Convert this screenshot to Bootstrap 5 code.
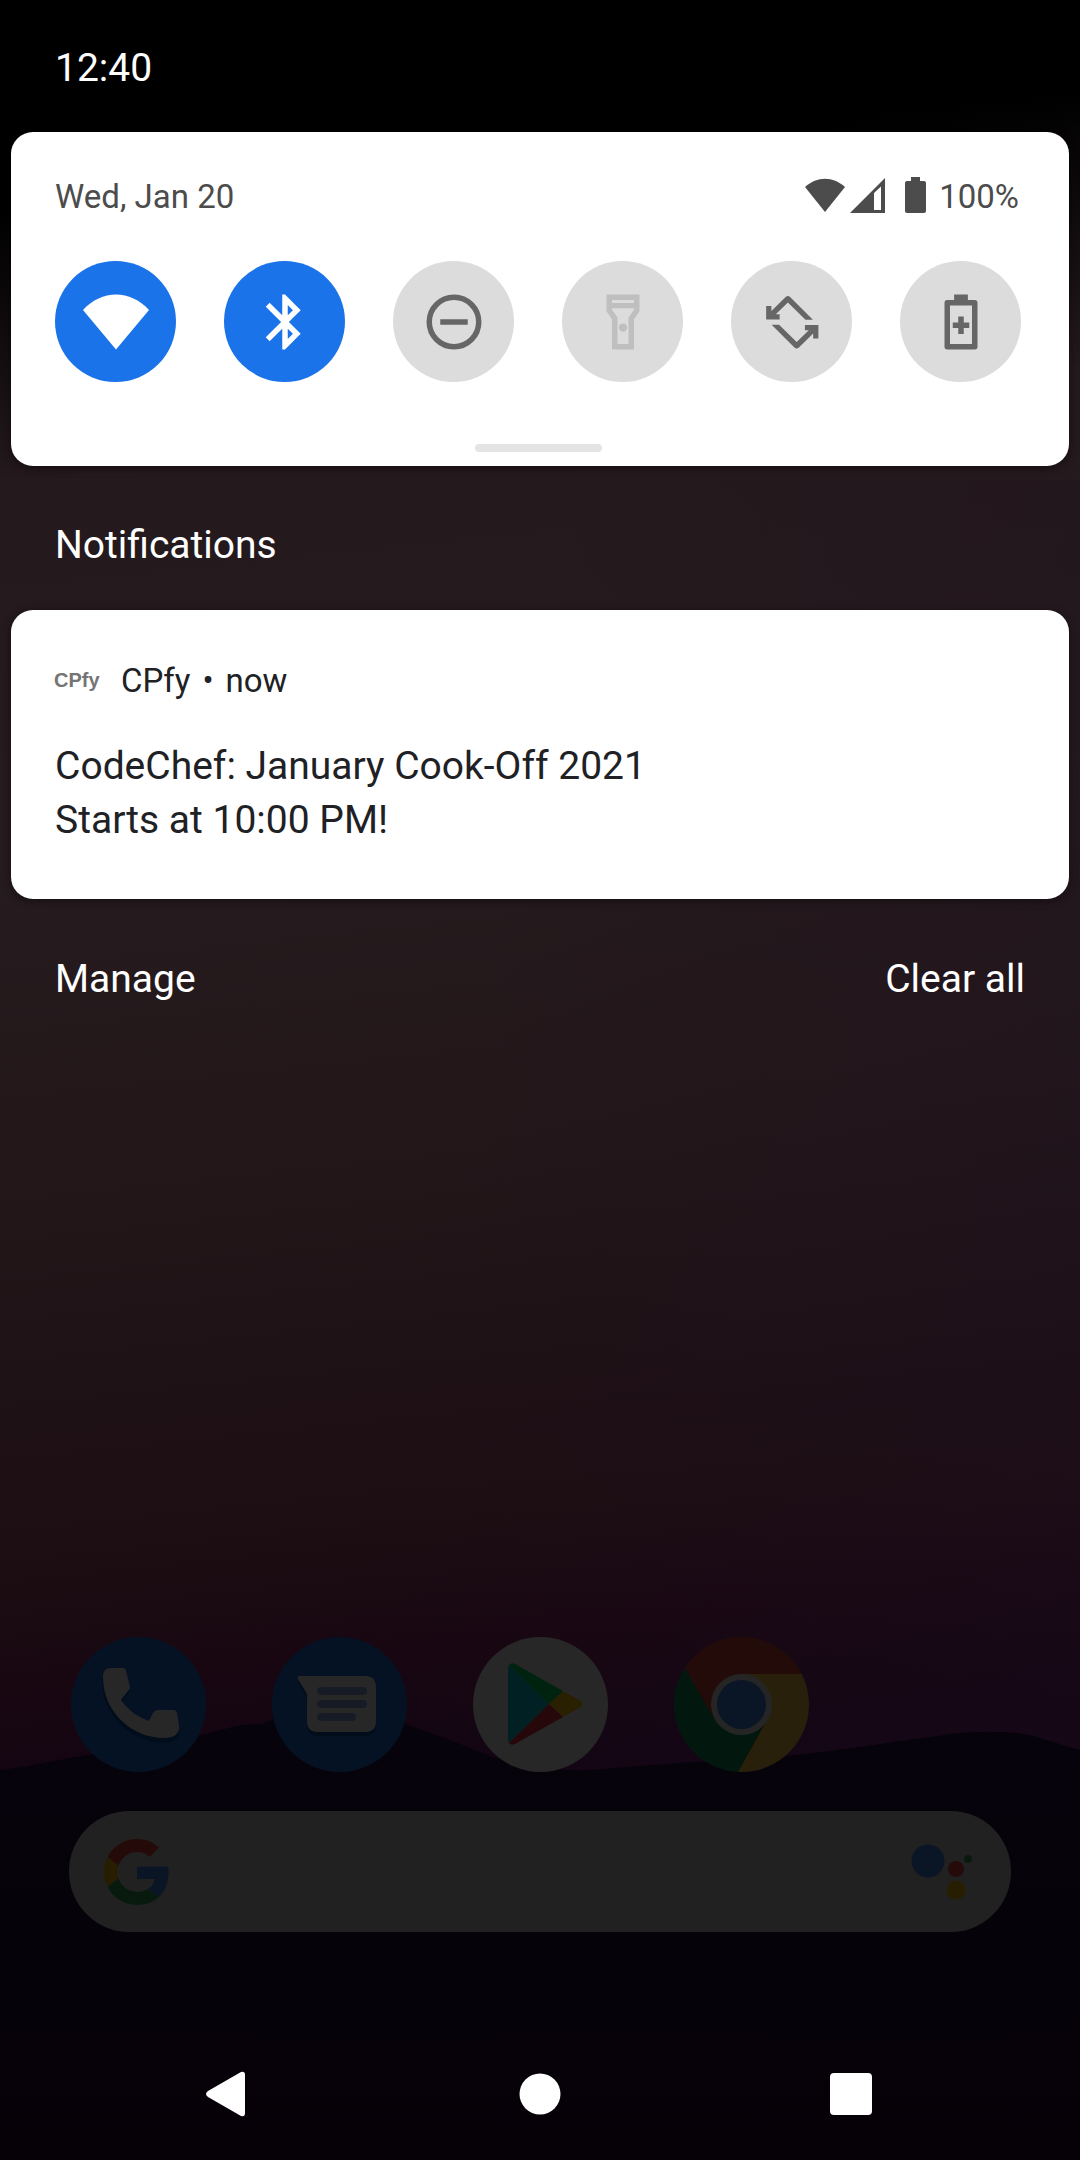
<!DOCTYPE html>
<html lang="en">
<head>
<meta charset="utf-8">
<meta name="viewport" content="width=device-width, initial-scale=1">
<title>Notification shade</title>
<link href="https://cdn.jsdelivr.net/npm/bootstrap@5.3.0/dist/css/bootstrap.min.css" rel="stylesheet">
<style>
  body {
    font-family: Roboto, "Liberation Sans", sans-serif;
    font-size: 39px;
    line-height: 44px;
    color: #fff;
    background: #050108;
  }
  .shade {
    isolation: isolate;
    background: linear-gradient(174deg, #000 0, #000 200px, #24191c 480px, #261b1e 860px, #23171a 1150px, #1f1216 1380px, #1c0d12 1560px, #180711 1680px, #120412 1800px);
  }
  .shade::before {
    content: "";
    position: absolute;
    inset: 480px 0 0 0;
    z-index: -1;
    background: linear-gradient(100deg, transparent 40%, rgba(30, 16, 34, .35));
  }
  .hills { bottom: 0; left: 0; height: 456px; z-index: -1; }
  .clock { padding: 46px 55px 42px; }
  .sheet {
    margin: 0 11px;
    border-radius: 22px;
    background: #fff;
    box-shadow: 0 2px 8px rgba(0, 0, 0, .45);
  }
  .quick { padding: 42px 48px 14px 44px; color: #4c4c4c; }
  .small-line { font-size: 33px; }
  .status-line { line-height: 46px; padding-right: 2px; }
  .tiles { margin-top: 41px; }
  .tile {
    width: 121px; height: 121px; padding: 0; border: 0;
    border-radius: 50%;
    background: #dcdcdc; color: #666;
  }
  .tile.on { background: #1a73e8; color: #fff; }
  .tile.off { color: #bfbfbf; }
  .handle { width: 127px; height: 8px; margin-top: 62px; background: #e4e4e4; }
  .section-title { margin: 57px 55px 43px; font-size: 39px; line-height: 44px; font-weight: 400; }
  .note { padding: 49px 44px 52px 43px; color: #202124; }
  .app-mark { font: bold 20px/42px "Liberation Sans", sans-serif; color: #757575; width: 67px; }
  .app-line { gap: 12px; }
  .note-text { margin-top: 36px; padding-left: 1px; line-height: 54px; }
  .actions { padding: 58px 55px 0; }
  .plain { background: none; border: 0; padding: 0; color: inherit; }
  .launcher { filter: brightness(.155); padding: 0 69px; }
  .dock { gap: 66px; padding-left: 2px; }
  .dock svg, .tile svg, .plain svg { display: block; }
  .searchbar { height: 121px; margin-top: 39px; padding: 0 38px 0 35px; background: #d6d6d8; }
  .searchbar input { background: none; border: 0; outline: 0; min-width: 0; }
  .navkeys { height: 132px; margin-top: 96px; padding: 0 18%; }
  .navkeys button { width: 68px; }
</style>
</head>
<body>
<div class="shade position-relative d-flex flex-column min-vh-100">
  <svg class="hills position-absolute w-100" viewBox="0 0 1080 456" preserveAspectRatio="none" aria-hidden="true">
    <defs><linearGradient id="hill" x1="0" y1="0" x2="0" y2="1"><stop offset="0" stop-color="#07030c"/><stop offset=".5" stop-color="#050209"/><stop offset="1" stop-color="#060107"/></linearGradient></defs>
    <path fill="url(#hill)" d="M0 66C40 61 65 54 100 49L206 30C240 20 250 20 262 20C290 8 310 2 340 2C370 2 400 20 440 32L490 52C530 64 560 67 590 66L690 58C780 56 850 44 950 30Q1000 25 1030 31L1080 46V456H0Z"/>
  </svg>

  <header class="clock"><time>12:40</time></header>

  <main>
    <section class="sheet quick" aria-label="Quick settings">
      <div class="small-line status-line d-flex align-items-center">
        <span class="me-auto">Wed, Jan 20</span>
        <svg width="42" height="40" viewBox="0 0 42 40" fill="currentColor" aria-hidden="true"><path d="M21 35L41 10C29-1 13-1 1 10Z"/></svg>
        <svg class="ms-1" width="35" height="40" viewBox="0 0 35 40" aria-hidden="true"><path fill="currentColor" fill-rule="evenodd" d="M0 36L35 1V36ZM24 33H31V9.500L24 16Z"/></svg>
        <svg width="54" height="40" viewBox="0 0 54 40" fill="currentColor" aria-hidden="true"><path d="M26 0h9v4h4q2 0 2 2v28q0 2-2 2H22q-2 0-2-2V6q0-2 2-2h4z"/></svg>
        <span>100%</span>
      </div>
      <div class="tiles d-flex justify-content-between">
        <button type="button" class="tile on d-flex align-items-center justify-content-center" aria-label="Wi-Fi"><svg width="66" height="66" viewBox="0 0 24 24" fill="currentColor"><path d="M12 22L24 7.600C20.500 3.900 16.400 2 12 2S3.500 3.900 0 7.600Z"/></svg></button>
        <button type="button" class="tile on d-flex align-items-center justify-content-center" aria-label="Bluetooth"><svg width="66" height="66" viewBox="0 0 24 24" fill="currentColor"><path d="M17.710 7.710L12 2h-1v7.590L6.410 5 5 6.410 10.590 12 5 17.590 6.410 19 11 14.410V22h1l5.710-5.710-4.300-4.290 4.300-4.290zM13 5.830l1.880 1.880L13 9.590V5.830zm1.880 10.460L13 18.170v-3.760l1.880 1.880z"/></svg></button>
        <button type="button" class="tile d-flex align-items-center justify-content-center" aria-label="Do not disturb"><svg width="66" height="66" viewBox="0 0 24 24" fill="none" stroke="currentColor" stroke-width="2"><circle cx="12" cy="12" r="9"/><path d="M7 12h10"/></svg></button>
        <button type="button" class="tile off d-flex align-items-center justify-content-center" aria-label="Flashlight"><svg width="66" height="66" viewBox="0 0 24 24" fill="currentColor"><path fill-rule="evenodd" d="M6 2H18V8.100L16 11V22H8V11L6 8.100ZM8 4V5.100H16V4ZM8 7V7.500L10 10.400V20H14V10.400L16 7.500V7Z"/><circle cx="12" cy="14" r="1.500"/></svg></button>
        <button type="button" class="tile d-flex align-items-center justify-content-center" aria-label="Auto-rotate"><svg width="66" height="66" viewBox="0 0 24 24" fill="currentColor"><path id="turn" d="M19.600 11.200L11.300 2.900Q10.500 2.200 9.700 2.900L4.500 8V6.200H2.600V11.100H7.500V9.200H6.100L10.500 4.900L16.900 11.200Z"/><use href="#turn" transform="rotate(180 12.100 12.100)"/></svg></button>
        <button type="button" class="tile d-flex align-items-center justify-content-center" aria-label="Battery saver"><svg width="66" height="66" viewBox="0 0 24 24" fill="currentColor"><path fill-rule="evenodd" d="M9.500 2h5v2H17q1 0 1 1V21q0 1-1 1H7q-1 0-1-1V5q0-1 1-1h2.500zM8 6V20h8V6ZM11 10h2v2.200h2v2h-2v2.200h-2v-2.200H9v-2h2z"/></svg></button>
      </div>
      <div class="handle rounded-pill mx-auto"></div>
    </section>

    <h2 class="section-title">Notifications</h2>

    <article class="sheet note">
      <div class="small-line d-flex align-items-start">
        <span class="app-mark">CPfy</span>
        <div class="app-line d-flex"><span>CPfy</span><span>•</span><span>now</span></div>
      </div>
      <div class="note-text">CodeChef: January Cook-Off 2021<br>Starts at 10:00 PM!</div>
    </article>

    <div class="actions d-flex justify-content-between">
      <button type="button" class="plain">Manage</button>
      <button type="button" class="plain">Clear all</button>
    </div>
  </main>

  <div class="launcher mt-auto">
    <div class="dock d-flex">
      <button type="button" class="plain" aria-label="Phone"><svg width="135" height="135" viewBox="0 0 135 135"><circle cx="67.500" cy="67.500" r="67.500" fill="#1a73e8"/><path fill="#0a3f88" opacity=".6" d="M31 44C31 38 35 35 40 35H52L59 54L50 67C56 76 66 84 78 88L87 77H102L108 92C109 101 103 106 93 106C62 106 31 80 31 44Z"/><path fill="#fafafa" d="M32 40C32 34 35 31 40 31H52Q55 31 55 34L59 50Q59 52 57 54L50 63C56 72 66 80 78 84L82 76Q84 73 87 73H102Q105 73 106 76L108 88C109 97 103 101 93 101C62 101 32 76 32 40Z"/></svg></button>
      <button type="button" class="plain" aria-label="Messages"><svg width="135" height="135" viewBox="0 0 135 135"><circle cx="67.500" cy="67.500" r="67.500" fill="#1a73e8"/><path fill="#0a3f88" opacity=".6" d="M26 43H104V88Q104 99 93 99H46Q35 99 35 88V61L26 45Z"/><path fill="#fafafa" d="M28 39H93Q104 39 104 50V84Q104 95 93 95H46Q35 95 35 84V57L26 42Q25 39 28 39Z"/><path stroke="#8fb0f0" stroke-width="8" stroke-linecap="round" d="M49 54H91M49 67H91M49 80H80"/></svg></button>
      <button type="button" class="plain" aria-label="Play Store"><svg width="135" height="135" viewBox="0 0 135 135"><circle cx="67.500" cy="67.500" r="67.500" fill="#fafafa"/><path fill="#00d0ea" d="M36 28L76 67L36 106Q35 105 35 102V32Q35 29 36 28Z"/><path fill="#00e06a" d="M36 28Q38 25 42 27L90 54L76 67Z"/><path fill="#ffcd00" d="M90 54L106 63Q113 67 106 71L90 80L76 67Z"/><path fill="#f83346" d="M36 106Q38 109 42 107L90 80L76 67Z"/></svg></button>
      <button type="button" class="plain" aria-label="Chrome"><svg width="135" height="135" viewBox="0 0 135 135"><defs><clipPath id="disc"><circle cx="67.500" cy="67.500" r="67.500"/></clipPath></defs><g clip-path="url(#disc)"><path fill="#0f9d58" d="M0 0L11 31L40 80L92 84L64 135H0Z"/><path fill="#db4437" d="M11 31L38 78L67 37H135V0H0Z"/><path fill="#ffcd40" d="M67 37H135V135H64L93 83Z"/></g><circle cx="67.500" cy="67.500" r="30.500" fill="#f1f1f1"/><circle cx="67.500" cy="67.500" r="24.500" fill="#4285f4"/></svg></button>
    </div>
    <label class="searchbar rounded-pill d-flex align-items-center">
      <svg width="66" height="66" viewBox="0 0 48 48" aria-hidden="true"><path fill="#EA4335" d="M24 9.500c3.540 0 6.710 1.220 9.210 3.600l6.850-6.850C35.900 2.380 30.470 0 24 0 14.620 0 6.510 5.380 2.560 13.220l7.980 6.190C12.430 13.720 17.740 9.500 24 9.500z"/><path fill="#4285F4" d="M46.980 24.550c0-1.570-.15-3.090-.38-4.550H24v9.020h12.940c-.58 2.960-2.260 5.480-4.780 7.180l7.730 6c4.510-4.180 7.090-10.360 7.090-17.650z"/><path fill="#FBBC05" d="M10.530 28.590c-.48-1.450-.76-2.990-.76-4.590s.27-3.140.76-4.590l-7.980-6.190C.92 16.460 0 20.120 0 24c0 3.880.92 7.540 2.560 10.780l7.970-6.190z"/><path fill="#34A853" d="M24 48c6.480 0 11.930-2.130 15.890-5.810l-7.730-6c-2.150 1.450-4.920 2.300-8.160 2.300-6.260 0-11.570-4.220-13.470-9.910l-7.980 6.190C6.510 42.620 14.620 48 24 48z"/></svg>
      <input type="search" class="flex-grow-1" aria-label="Search">
      <svg width="62" height="60" viewBox="0 0 62 60" aria-hidden="true"><circle cx="17" cy="19" r="16.500" fill="#4285f4"/><circle cx="45" cy="27" r="8" fill="#ea4335"/><circle cx="57" cy="17" r="4" fill="#34a853"/><circle cx="45" cy="48" r="9.500" fill="#fbbc05"/></svg>
    </label>
  </div>

  <nav class="navkeys d-flex align-items-center justify-content-between" aria-label="System navigation">
    <button type="button" class="plain" aria-label="Back"><svg class="mx-auto" width="44" height="46" viewBox="0 0 44 46" fill="#fff"><path d="M2 20L35 1Q39 0 39 4V42Q39 46 35 45L2 26Q-2 23 2 20Z"/></svg></button>
    <button type="button" class="plain" aria-label="Home"><svg class="mx-auto" width="42" height="42" viewBox="0 0 42 42" fill="#fff"><circle cx="21" cy="21" r="20.500"/></svg></button>
    <button type="button" class="plain" aria-label="Recent apps"><svg class="mx-auto" width="44" height="42" viewBox="0 0 44 42" fill="#fff"><rect width="42" height="42" rx="4"/></svg></button>
  </nav>
</div>
<script src="https://cdn.jsdelivr.net/npm/bootstrap@5.3.0/dist/js/bootstrap.bundle.min.js"></script>
</body>
</html>
